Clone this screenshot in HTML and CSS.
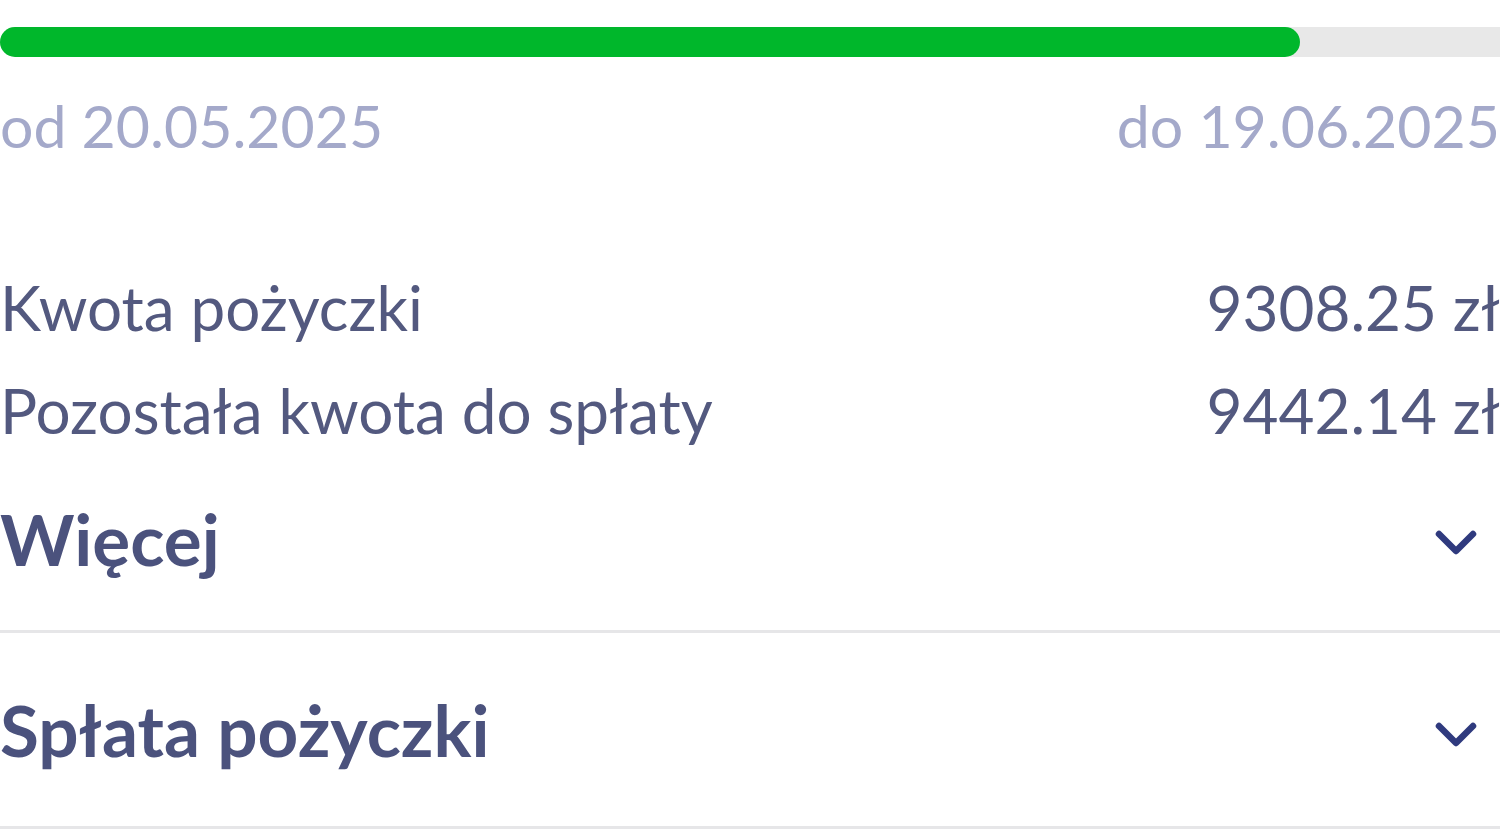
FILE: index.html
```html
<!DOCTYPE html>
<html lang="pl">
<head>
<meta charset="utf-8">
<title>Pożyczka</title>
<link rel="stylesheet" href="styles.css">
</head>
<body>
<div class="page">
  <div class="track"><div class="fill" style="width:1300px"></div></div>
  <div class="dates">
    <span>od 20.05.2025</span>
    <span>do 19.06.2025</span>
  </div>
  <div class="details">
    <div class="row"><span>Kwota pożyczki</span><span>9308.25 zł</span></div>
    <div class="row"><span>Pozostała kwota do spłaty</span><span>9442.14 zł</span></div>
  </div>
  <div class="section first">
    <span class="title">Więcej</span>
    <svg class="chev" viewBox="0 0 44 32" width="44" height="32"><path d="M5 6 L22 23 L39 6" fill="none" stroke="#2f3a7e" stroke-width="6.5" stroke-linecap="round" stroke-linejoin="round"/></svg>
  </div>
  <div class="section">
    <span class="title">Spłata pożyczki</span>
    <svg class="chev" viewBox="0 0 44 32" width="44" height="32"><path d="M5 6 L22 23 L39 6" fill="none" stroke="#2f3a7e" stroke-width="6.5" stroke-linecap="round" stroke-linejoin="round"/></svg>
  </div>
</div>
</body>
</html>
```
FILE: styles.css
```css
html, body {
  margin: 0;
  padding: 0;
  background: #ffffff;
}
.page {
  width: 1500px;
  height: 840px;
  overflow: hidden;
  font-family: "Lato", "Open Sans", sans-serif;
}
.track {
  margin-top: 27px;
  height: 30px;
  background: #e8e8e8;
  border-radius: 15px 0 0 15px;
}
.fill {
  height: 100%;
  background: #00b72b;
  border-radius: 15px;
}
.dates {
  display: flex;
  justify-content: space-between;
  font-size: 59px;
  line-height: 70px;
  height: 70px;
  margin-top: 34px;
  color: #a4a9ca;
}
.details {
  margin-top: 95px;
  display: flex;
  flex-direction: column;
}
.row {
  display: flex;
  justify-content: space-between;
  font-size: 62px;
  line-height: 103px;
  height: 103px;
  color: #53597f;
}
.section {
  display: flex;
  align-items: center;
  justify-content: space-between;
  height: 193px;
  border-bottom: 3px solid #e6e6e8;
  padding-right: 22px;
}
.section.first {
  height: 152px;
  padding-bottom: 16px;
}
.title {
  font-size: 71px;
  font-weight: 700;
  color: #4b527d;
}
.chev {
  display: block;
  margin-top: 12px;
}
```
